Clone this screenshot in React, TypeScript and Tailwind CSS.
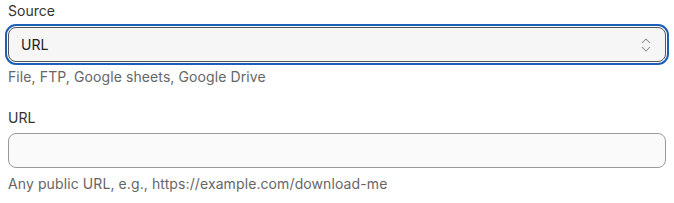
import { ChevronsUpDown } from 'lucide-react';

export default function App() {
  return (
    <div className="w-[674px] h-[203px] bg-white px-2 pt-[2px] font-['Inter',sans-serif] text-[#333]">
      {/* Source select */}
      <label className="block text-[14px] leading-[18px]">Source</label>
      <div className="mt-[7px] relative flex items-center h-[35px] rounded-[8px] border border-[#555] bg-[#f6f6f6] outline-2 outline-offset-1 outline-[#1d5fb8] pl-3 pr-[10px]">
        <span className="text-[14px] text-[#222]">URL</span>
        <ChevronsUpDown className="ml-auto w-[18px] h-[18px] text-[#8a8a8a]" strokeWidth={1.4} />
      </div>
      <p className="mt-[6px] text-[14px] leading-[18px] tracking-[0.1px] text-[#666]">File, FTP, Google sheets, Google Drive</p>

      {/* URL input */}
      <label className="block mt-[23px] text-[14px] leading-[18px]">URL</label>
      <div className="mt-[6px] h-[35px] rounded-[8px] border border-[#999] bg-[#fafafa]" />
      <p className="mt-[7px] text-[14px] leading-[18px] tracking-[0.1px] text-[#666]">Any public URL, e.g., https://example.com/download-me</p>
    </div>
  );
}
